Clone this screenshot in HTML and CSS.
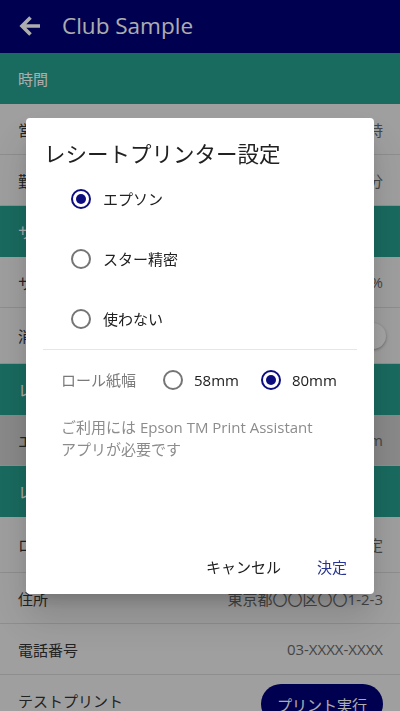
FILE: index.html
```html
<!DOCTYPE html>
<html lang="ja">

<head>
    <meta charset="UTF-8">
    <meta name="viewport" content="width=device-width, initial-scale=1.0">
    <title>Club Sample</title>
    <link rel="stylesheet" href="styles.css">
</head>

<body>
    <div class="app-header">
        <svg class="back-icon" viewBox="0 0 24 24" width="24" height="24">
            <path d="M22 12H5M12.5 3.5L4 12l8.5 8.5" fill="none" stroke="#fff" stroke-width="3.6"></path>
        </svg>
        <h1>Club Sample</h1>
    </div>

    <div class="settings">
        <div class="section">時間</div>
        <div class="row"><span>営業時間</span><span class="value">10時～翌5時</span></div>
        <div class="row"><span>勤務時間単位</span><span class="value">15分</span></div>

        <div class="section">サービス料・税</div>
        <div class="row"><span>サービス料</span><span class="value">20%</span></div>
        <div class="row tall">
            <span>消費税込み</span>
            <span class="switch"><span class="thumb"></span></span>
        </div>

        <div class="section">レシートプリンター</div>
        <div class="row disabled"><span>エプソン</span><span class="value">80mm</span></div>

        <div class="section">レシート情報</div>
        <div class="row tall"><span>ロゴ</span><span class="value">未設定</span></div>
        <div class="row"><span>住所</span><span class="value">東京都〇〇区〇〇1-2-3</span></div>
        <div class="row"><span>電話番号</span><span class="value">03-XXXX-XXXX</span></div>
        <div class="row"><span>テストプリント</span><button class="print-btn">プリント実行</button></div>
    </div>

    <!-- プリンター設定ダイアログ -->
    <div class="overlay">
        <div class="dialog">
            <h2 class="dialog-title">レシートプリンター設定</h2>

            <ul class="printer-options">
                <li><span class="radio checked"></span>エプソン</li>
                <li><span class="radio"></span>スター精密</li>
                <li><span class="radio"></span>使わない</li>
            </ul>

            <hr class="divider">

            <div class="paper-row">
                <span class="paper-label">ロール紙幅</span>
                <span class="paper-option"><span class="radio"></span>58mm</span>
                <span class="paper-option"><span class="radio checked"></span>80mm</span>
            </div>

            <p class="note">ご利用には Epson TM Print Assistant<br>アプリが必要です</p>

            <div class="dialog-actions">
                <button class="text-btn">キャンセル</button>
                <button class="text-btn primary">決定</button>
            </div>
        </div>
    </div>
</body>

</html>
```

FILE: styles.css
```css
body {
    margin: 0;
    font-family: "Open Sans", "Noto Sans CJK JP", sans-serif;
    background-color: #ffffff;
    height: 711px;
    overflow: hidden;
}

.app-header {
    background-color: #000076;
    height: 53px;
    display: flex;
    align-items: center;
    padding: 0 18px;
}

.back-icon {
    margin-top: -1px;
}

.app-header h1 {
    margin: 0 0 0 20px;
    font-size: 22.5px;
    font-weight: 400;
    color: #ffffff;
    padding-bottom: 2px;
}

.section {
    background-color: #269d8d;
    color: #ffffff;
    height: 51px;
    display: flex;
    align-items: center;
    padding: 0 18px;
    font-size: 15px;
}

.row {
    background-color: #ebebeb;
    height: 50px;
    border-bottom: 1px solid #d2d2d2;
    display: flex;
    align-items: center;
    justify-content: space-between;
    padding: 0 17px 0 18px;
    font-size: 15px;
    color: #333333;
}

.row.tall {
    height: 55px;
}

.row.disabled {
    background-color: #cbcbcb;
}

.row .value {
    color: #666666;
}

.switch {
    width: 36px;
    height: 14px;
    border-radius: 7px;
    background-color: #bdbdbd;
    position: relative;
    margin-right: -1px;
}

.switch .thumb {
    position: absolute;
    right: -2px;
    top: -6px;
    width: 26px;
    height: 26px;
    border-radius: 50%;
    background-color: #f4f4f4;
    box-shadow: 0 1px 3px rgba(0, 0, 0, 0.35);
}

.print-btn {
    font-family: inherit;
    font-size: 15px;
    color: #ffffff;
    background-color: #000076;
    border: none;
    border-radius: 20px;
    padding: 0 16px;
    height: 40px;
    margin-top: 8px;
}

/* ダイアログ */
.overlay {
    position: fixed;
    z-index: 10;
    top: 0;
    left: 0;
    right: 0;
    bottom: 0;
    background-color: rgba(0, 0, 0, 0.32);
    display: flex;
    justify-content: center;
    align-items: center;
}

.dialog {
    width: 348px;
    height: 476px;
    background-color: #ffffff;
    border-radius: 4px;
    box-shadow: 0 11px 15px -7px rgba(0, 0, 0, 0.2), 0 24px 38px 3px rgba(0, 0, 0, 0.14);
    display: flex;
    flex-direction: column;
    box-sizing: border-box;
    padding-top: 20px;
}

.dialog-title {
    margin: 0;
    padding: 0 18px;
    font-size: 21.5px;
    line-height: 32px;
    font-weight: 400;
    color: #212121;
}

.printer-options {
    list-style-type: none;
    margin: -1px 0 0;
    padding: 0 0 0 45px;
}

.printer-options li {
    height: 60px;
    display: flex;
    align-items: center;
    font-size: 15px;
    color: #212121;
}

.radio {
    width: 20px;
    height: 20px;
    box-sizing: border-box;
    border: 2px solid #757575;
    border-radius: 50%;
    margin-right: 12px;
    position: relative;
    flex-shrink: 0;
}

.radio.checked {
    border-color: #0d0d80;
}

.radio.checked::after {
    content: "";
    position: absolute;
    top: 3px;
    left: 3px;
    width: 10px;
    height: 10px;
    border-radius: 50%;
    background-color: #0d0d80;
}

.divider {
    margin: 0 17px;
    border: none;
    border-top: 1px solid #e6e6e6;
}

.paper-row {
    height: 60px;
    display: flex;
    align-items: center;
    padding-left: 35px;
    font-size: 15px;
    color: #212121;
}

.paper-label {
    color: #7a7a7a;
    margin-right: 27px;
}

.paper-option {
    display: flex;
    align-items: center;
    margin-right: 22px;
}

.paper-option .radio {
    margin-right: 11px;
}

.note {
    margin: 6px 0 0;
    padding-left: 35px;
    font-size: 15px;
    line-height: 22px;
    color: #8c8c8c;
}

.dialog-actions {
    margin-top: auto;
    display: flex;
    justify-content: flex-end;
    gap: 12px;
    padding: 0 15px 9px;
}

.text-btn {
    font-family: inherit;
    font-size: 15px;
    height: 36px;
    padding: 0 12px;
    background: none;
    border: none;
    color: #212121;
    cursor: pointer;
}

.text-btn.primary {
    color: #283593;
}
```
